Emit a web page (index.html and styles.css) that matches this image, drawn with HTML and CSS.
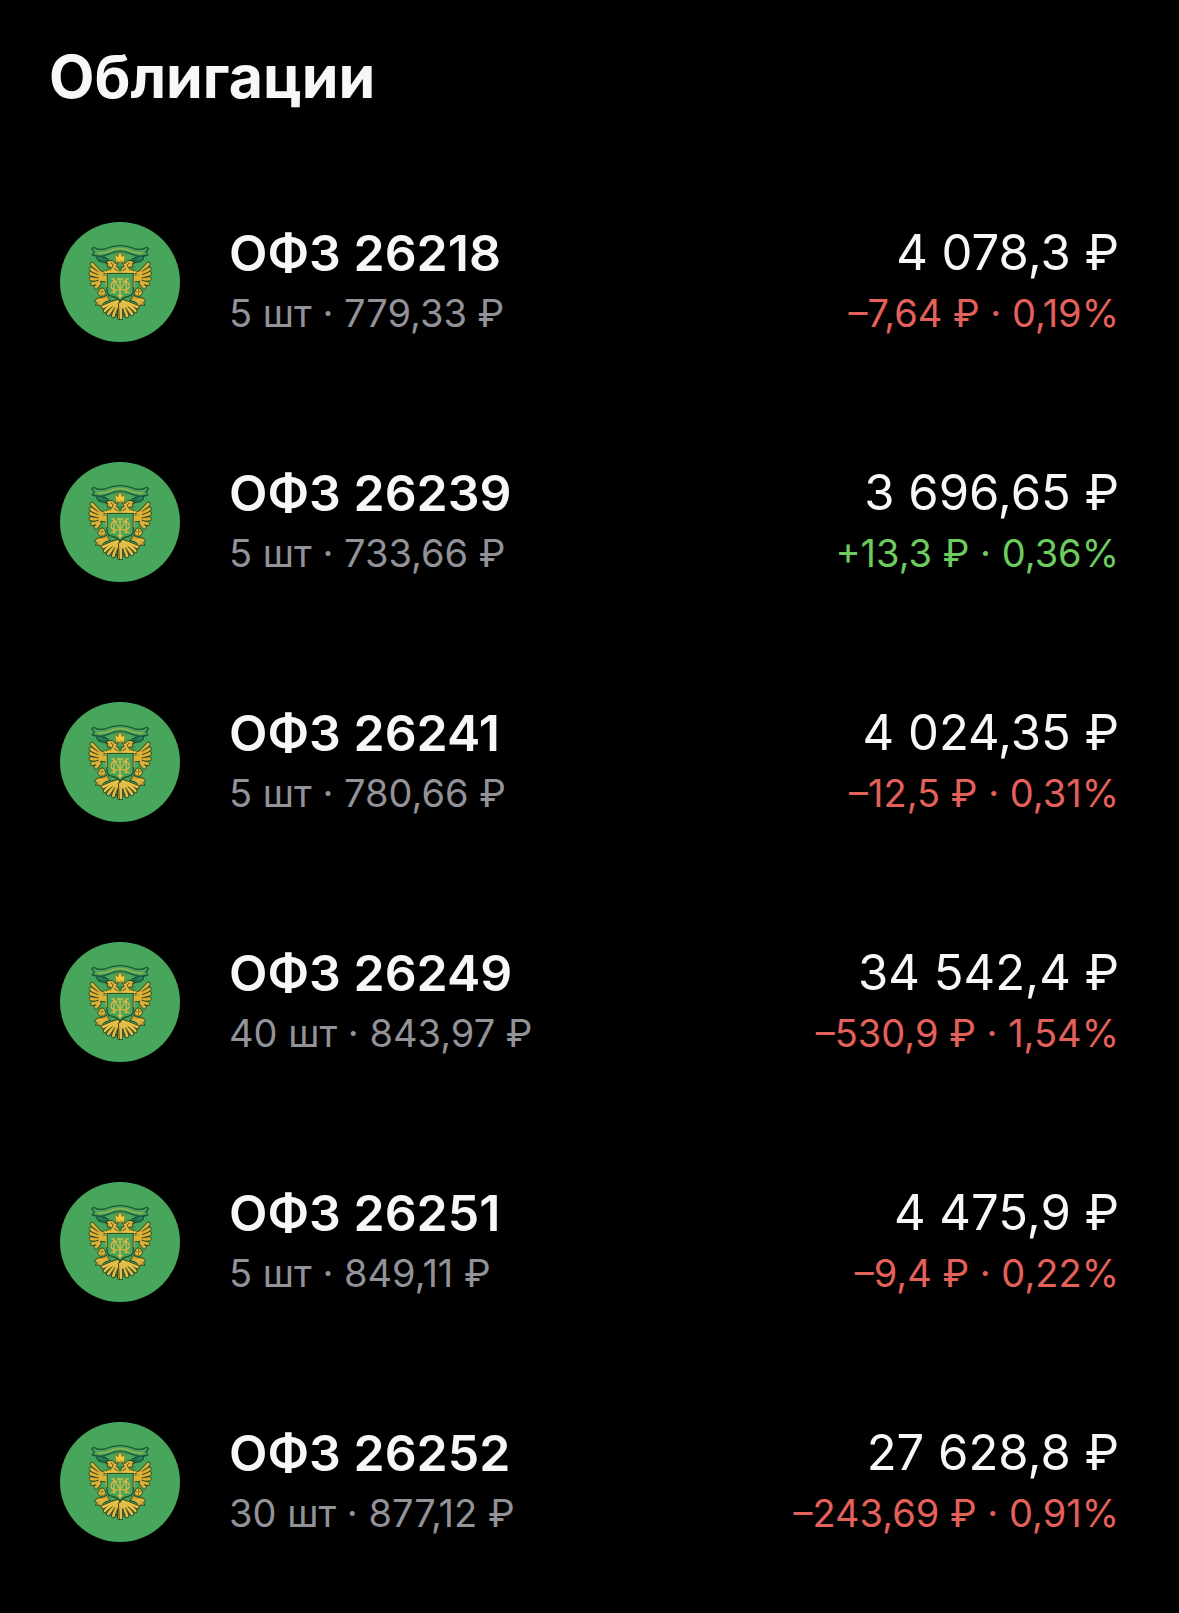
FILE: index.html
```html
<!DOCTYPE html>
<html lang="ru">
<head>
    <meta charset="UTF-8">
    <meta name="viewport" content="width=device-width, initial-scale=1.0">
    <title>Облигации</title>
    <link rel="stylesheet" href="styles.css">
</head>
<body>
    <!-- Emblem shared by all the rows -->
    <svg class="defs" width="0" height="0" aria-hidden="true">
        <symbol id="emblem" viewBox="30 36 360 360">
            <g id="half" stroke-linejoin="round" stroke-linecap="round">
                <path d="M142 136 Q136 150 150 155 L168 158 L176 148 L158 138 Z" fill="#1f7050" stroke="#174a35" stroke-width="3"/>
                <path d="M146 144 Q154 142 158 150" fill="none" stroke="#3f9a60" stroke-width="3"/>
                <path d="M211 106 Q184 108 164 117 Q146 121 132 112 L125 115 L133 126 L127 135 Q152 143 174 133 Q194 124 211 124" fill="#4ca35c" stroke="#1d5a3c" stroke-width="4"/>
                <path d="M144 129 Q170 130 188 119 L211 115" fill="none" stroke="#a3b84b" stroke-width="4" stroke-dasharray="3 3"/>
                <!-- wing -->
                <g fill="none" stroke="#2b4a24" stroke-width="14">
                    <path d="M126 162 L148 186 M123 177 L148 194 M122 191 L148 202 M123 206 L147 210 M127 221 L147 216 M138 232 L148 220"/>
                    <path d="M148 188 L172 192 M148 198 L170 202 M150 208 L170 210"/>
                </g>
                <g fill="none" stroke="#ddb036" stroke-width="9">
                    <path d="M126 162 L148 186 M123 177 L148 194 M122 191 L148 202 M123 206 L147 210 M127 221 L147 216 M138 232 L148 220"/>
                    <path d="M148 188 L172 192 M148 198 L167 202 M150 208 L167 209"/>
                </g>
                <path d="M131 174 L144 184 M130 188 L144 194 M129 200 L145 204 M132 214 L145 211" fill="none" stroke="#3f4a1c" stroke-width="3"/>
                <!-- neck and head -->
                <path d="M163 184 Q178 181 182 171 L171 171 L174 161 L167 160 Q174 149 187 151 L195 160 L204 158 L199 170 L208 175 L211 188 L164 192 Z" fill="#e2b63a" stroke="#2b4a24" stroke-width="3"/>
                <path d="M183 158 L190 166 L181 180 M194 176 L204 184" fill="none" stroke="#574f1c" stroke-width="3"/>
                <!-- leg -->
                <path d="M151 235 Q161 231 165 240 L168 251 Q163 260 151 259 L143 249 Z" fill="#e2b63a" stroke="#2b4a24" stroke-width="3"/>
                <path d="M149 246 L163 244 M155 237 L156 258" stroke="#806a22" stroke-width="2"/>
                <path d="M160 261 L143 264 L133 272 L140 278 L136 286 L148 285 L156 291 L162 278 L181 271 L171 257 Z" fill="#c9a436" stroke="#2b4a24" stroke-width="3"/>
                <path d="M141 271 L158 270 M149 281 L169 266" stroke="#f0c849" stroke-width="3"/>
                <!-- tail -->
                <g fill="none" stroke="#2b4a24" stroke-width="14">
                    <path d="M203 274 Q182 280 159 291 M205 277 Q176 289 165 303 M207 280 Q184 296 175 312 M209 282 Q193 302 190 318 M210 282 L208 324"/>
                </g>
                <g fill="none" stroke="#e6bd45" stroke-width="8">
                    <path d="M203 274 Q182 280 159 291 M205 277 Q176 289 165 303 M207 280 Q184 296 175 312 M209 282 Q193 302 190 318 M210 282 L208 324"/>
                </g>
                <path d="M187 290 L170 305 M194 293 L183 314 M202 296 L199 320" fill="none" stroke="#4b5a26" stroke-width="3"/>
                <!-- shield -->
                <path d="M211 190 L171 190 L171 243 Q171 255 184 258 Q200 261 211 273 Z" fill="#48a65c"/>
                <path d="M211 190 L171 190 L171 243 Q171 255 184 258 Q200 261 211 273" fill="none" stroke="#285529" stroke-width="4"/>
                <path d="M163 186 L211 186" stroke="#edc344" stroke-width="5"/>
                <path d="M168 192 L169 230" stroke="#dcb13a" stroke-width="3"/>
                <!-- monogram -->
                <path d="M186 207 L192 207 L192 246 M184 247 L197 247 M192 208 L210 240 M203 214 Q183 213 183 228 Q184 241 203 240" fill="none" stroke="#e0b843" stroke-width="4"/>
            </g>
            <use href="#half" transform="translate(421 0) scale(-1 1)"/>
            <path d="M201 207 H220 M210 207 V260 M204 254 L210 262 L217 254" fill="none" stroke="#e4bd43" stroke-width="4"/>
            <path d="M198 157 L194 133 L203 140 L210 124 L217 140 L226 133 L223 157 Z" fill="#f4c63c" stroke="#6c6522" stroke-width="2"/>
            <path d="M200 153 H221" stroke="#a78427" stroke-width="2"/>
            <path d="M203 173 L210 166 L218 173 L214 184 H206 Z" fill="#348449"/>
        </symbol>
    </svg>

    <section class="bonds">
        <h1>Облигации</h1>
        <ul class="bond-list">
            <li class="bond">
                <svg class="logo" aria-hidden="true"><use href="#emblem"/></svg>
                <div class="info">
                    <p class="name">ОФЗ 26218</p>
                    <p class="details">5 шт · 779,33 ₽</p>
                </div>
                <div class="value">
                    <p class="amount">4 078,3 ₽</p>
                    <p class="change down">–7,64 ₽ · 0,19%</p>
                </div>
            </li>
            <li class="bond">
                <svg class="logo" aria-hidden="true"><use href="#emblem"/></svg>
                <div class="info">
                    <p class="name">ОФЗ 26239</p>
                    <p class="details">5 шт · 733,66 ₽</p>
                </div>
                <div class="value">
                    <p class="amount">3 696,65 ₽</p>
                    <p class="change up">+13,3 ₽ · 0,36%</p>
                </div>
            </li>
            <li class="bond">
                <svg class="logo" aria-hidden="true"><use href="#emblem"/></svg>
                <div class="info">
                    <p class="name">ОФЗ 26241</p>
                    <p class="details">5 шт · 780,66 ₽</p>
                </div>
                <div class="value">
                    <p class="amount">4 024,35 ₽</p>
                    <p class="change down">–12,5 ₽ · 0,31%</p>
                </div>
            </li>
            <li class="bond">
                <svg class="logo" aria-hidden="true"><use href="#emblem"/></svg>
                <div class="info">
                    <p class="name">ОФЗ 26249</p>
                    <p class="details">40 шт · 843,97 ₽</p>
                </div>
                <div class="value">
                    <p class="amount">34 542,4 ₽</p>
                    <p class="change down">–530,9 ₽ · 1,54%</p>
                </div>
            </li>
            <li class="bond">
                <svg class="logo" aria-hidden="true"><use href="#emblem"/></svg>
                <div class="info">
                    <p class="name">ОФЗ 26251</p>
                    <p class="details">5 шт · 849,11 ₽</p>
                </div>
                <div class="value">
                    <p class="amount">4 475,9 ₽</p>
                    <p class="change down">–9,4 ₽ · 0,22%</p>
                </div>
            </li>
            <li class="bond">
                <svg class="logo" aria-hidden="true"><use href="#emblem"/></svg>
                <div class="info">
                    <p class="name">ОФЗ 26252</p>
                    <p class="details">30 шт · 877,12 ₽</p>
                </div>
                <div class="value">
                    <p class="amount">27 628,8 ₽</p>
                    <p class="change down">–243,69 ₽ · 0,91%</p>
                </div>
            </li>
        </ul>
    </section>
</body>
</html>
```
FILE: styles.css
```css
/* General body styling */
body {
    font-family: Inter, "Liberation Sans", sans-serif;
    margin: 0;
    padding: 0;
    background-color: #000000;
    color: #f7f7f9;
}

.defs {
    display: block;
}

/* Section heading */
.bonds h1 {
    margin: 0;
    padding: 41px 49px 49px;
    font-size: 59px;
    font-weight: 700;
    line-height: 72px;
}

/* List of bonds */
.bond-list {
    list-style: none;
    margin: 0;
    padding: 0;
}

.bond {
    display: flex;
    align-items: center;
    padding: 59px 60px;
}

.bond p {
    margin: 0;
    line-height: 60px;
    white-space: nowrap;
}

/* Round emblem */
.logo {
    flex: none;
    width: 120px;
    height: 120px;
    margin-right: 49px;
    border-radius: 50%;
    background-color: #48a65c;
}

.info,
.value {
    padding-top: 2px;
}

.info {
    flex: 1;
}

.value {
    text-align: right;
}

.name {
    font-size: 50px;
    font-weight: 600;
}

.amount {
    font-size: 49px;
}

.details,
.change {
    font-size: 38px;
}

.details {
    color: #929298;
}

.up {
    color: #6ccc5d;
}

.down {
    color: #e4605b;
}
```
